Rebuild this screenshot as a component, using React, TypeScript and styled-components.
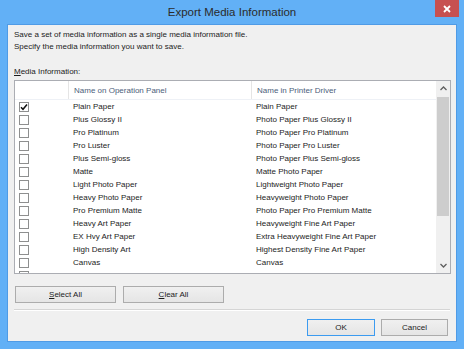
import styled, { createGlobalStyle } from "styled-components";

const GlobalStyle = createGlobalStyle`
  html, body {
    margin: 0;
    padding: 0;
  }
  body {
    background: #62b0f6;
    font-family: "Liberation Sans", Arial, sans-serif;
  }
`;

const media: [string, string][] = [
  ["Plain Paper", "Plain Paper"],
  ["Plus Glossy II", "Photo Paper Plus Glossy II"],
  ["Pro Platinum", "Photo Paper Pro Platinum"],
  ["Pro Luster", "Photo Paper Pro Luster"],
  ["Plus Semi-gloss", "Photo Paper Plus Semi-gloss"],
  ["Matte", "Matte Photo Paper"],
  ["Light Photo Paper", "Lightweight Photo Paper"],
  ["Heavy Photo Paper", "Heavyweight Photo Paper"],
  ["Pro Premium Matte", "Photo Paper Pro Premium Matte"],
  ["Heavy Art Paper", "Heavyweight Fine Art Paper"],
  ["EX Hvy Art Paper", "Extra Heavyweight Fine Art Paper"],
  ["High Density Art", "Highest Density Fine Art Paper"],
  ["Canvas", "Canvas"],
  ["Japanese Paper", "Japanese Paper Washi"],
];

const Frame = styled.div`
  width: 464px;
  height: 349px;
  box-sizing: border-box;
  background: #62b0f6;
  display: flex;
  flex-direction: column;
  padding: 0 7px 7px 7px;
`;

const TitleBar = styled.div`
  position: relative;
  height: 24px;
  display: flex;
  align-items: center;
  justify-content: center;
  font-size: 11.5px;
  color: #2b2b2b;
`;

const CloseButton = styled.div`
  position: absolute;
  top: 0;
  right: -2px;
  width: 24px;
  height: 17px;
  background: #c75050;
  display: flex;
  align-items: center;
  justify-content: center;
`;

const Client = styled.div`
  flex: 1;
  background: #f0f0f0;
  border: 1px solid #4f9be6;
  display: flex;
  flex-direction: column;
  padding: 4px 5px 0 6px;
  font-size: 8px;
  color: #1c1c1c;
`;

const Intro = styled.div`
  line-height: 12px;
`;

const Label = styled.div`
  margin-top: 13px;
  line-height: 12px;
`;

const ListBox = styled.div`
  margin-top: 2px;
  height: 194px;
  box-sizing: border-box;
  border: 1px solid #abadb3;
  background: #fff;
  display: flex;
  overflow: hidden;
`;

const ListContent = styled.div`
  flex: 1;
  display: flex;
  flex-direction: column;
  overflow: hidden;
`;

const Grid = styled.div<{ $header?: boolean }>`
  display: grid;
  grid-template-columns: 53px 183px 1fr;
  height: ${(p) => (p.$header ? "19px" : "13px")};
  flex-shrink: 0;
  box-sizing: border-box;
  border-bottom: ${(p) => (p.$header ? "1px solid #eef1f6" : "none")};
  color: ${(p) => (p.$header ? "#4c607a" : "#1c1c1c")};
`;

const Cell = styled.div<{ $sep?: boolean }>`
  display: flex;
  align-items: center;
  padding-left: 5px;
  white-space: nowrap;
  overflow: hidden;
  border-left: ${(p) => (p.$sep ? "1px solid #e5e5e5" : "none")};
`;

const CheckCell = styled.div`
  display: flex;
  align-items: center;
  padding-left: 4px;
`;

const CheckBox = styled.div`
  width: 10px;
  height: 10px;
  box-sizing: border-box;
  border: 1px solid #8e8f8f;
  background: #fff;
  display: flex;
  align-items: center;
  justify-content: center;
`;

const ScrollBar = styled.div`
  width: 14px;
  background: #f0f0f0;
  display: flex;
  flex-direction: column;
`;

const Arrow = styled.div`
  height: 15px;
  flex-shrink: 0;
  display: flex;
  align-items: center;
  justify-content: center;
`;

const Track = styled.div`
  flex: 1;
  padding: 1px 1px 0 1px;
`;

const Thumb = styled.div`
  height: 119px;
  background: #cdcdcd;
`;

const ButtonRow = styled.div<{ $end?: boolean }>`
  display: flex;
  gap: ${(p) => (p.$end ? "6px" : "7px")};
  justify-content: ${(p) => (p.$end ? "flex-end" : "flex-start")};
  margin-top: ${(p) => (p.$end ? "8px" : "12px")};
  padding: ${(p) => (p.$end ? "0 3px 0 0" : "0 0 0 1px")};
`;

const Button = styled.div<{ $w: number; $default?: boolean }>`
  width: ${(p) => p.$w}px;
  height: 17px;
  box-sizing: border-box;
  border: 1px solid ${(p) => (p.$default ? "#3c9bf0" : "#acacac")};
  background: linear-gradient(#f0f0f0, #e5e5e5);
  display: flex;
  align-items: center;
  justify-content: center;
  font-size: 8px;
  color: #1c1c1c;
`;

const Separator = styled.div`
  margin-top: 6px;
  margin-right: 1px;
  height: 1px;
  background: #d5d5d5;
  border-bottom: 1px solid #fff;
`;

const Check = () => (
  <svg width="8" height="8" viewBox="0 0 8 8">
    <path d="M1 4.2 L3 6.3 L7 1.5" fill="none" stroke="#111" strokeWidth="1.5" />
  </svg>
);

const Chevron = ({ down }: { down?: boolean }) => (
  <svg width="7" height="5" viewBox="0 0 7 5">
    <path
      d={down ? "M0.5 1 L3.5 4 L6.5 1" : "M0.5 4 L3.5 1 L6.5 4"}
      fill="none"
      stroke="#5f5f5f"
      strokeWidth="1.3"
    />
  </svg>
);

export default function App() {
  return (
    <>
      <GlobalStyle />
      <Frame>
        <TitleBar>
          Export Media Information
          <CloseButton>
            <svg width="8" height="8" viewBox="0 0 8 8">
              <path d="M1 1 L7 7 M7 1 L1 7" stroke="#fff" strokeWidth="1.8" />
            </svg>
          </CloseButton>
        </TitleBar>
        <Client>
          <Intro>
            Save a set of media information as a single media information file.
            <br />
            Specify the media information you want to save.
          </Intro>
          <Label>
            <u>M</u>edia Information:
          </Label>
          <ListBox>
            <ListContent>
              <Grid $header>
                <CheckCell />
                <Cell $sep>Name on Operation Panel</Cell>
                <Cell $sep>Name in Printer Driver</Cell>
              </Grid>
              {media.map(([panel, driver], i) => (
                <Grid key={panel}>
                  <CheckCell>
                    <CheckBox>{i === 0 && <Check />}</CheckBox>
                  </CheckCell>
                  <Cell>{panel}</Cell>
                  <Cell>{driver}</Cell>
                </Grid>
              ))}
            </ListContent>
            <ScrollBar>
              <Arrow>
                <Chevron />
              </Arrow>
              <Track>
                <Thumb />
              </Track>
              <Arrow>
                <Chevron down />
              </Arrow>
            </ScrollBar>
          </ListBox>
          <ButtonRow>
            <Button $w={101}>
              <span>
                <u>S</u>elect All
              </span>
            </Button>
            <Button $w={101}>
              <span>
                <u>C</u>lear All
              </span>
            </Button>
          </ButtonRow>
          <Separator />
          <ButtonRow $end>
            <Button $w={68} $default>
              OK
            </Button>
            <Button $w={67}>Cancel</Button>
          </ButtonRow>
        </Client>
      </Frame>
    </>
  );
}
